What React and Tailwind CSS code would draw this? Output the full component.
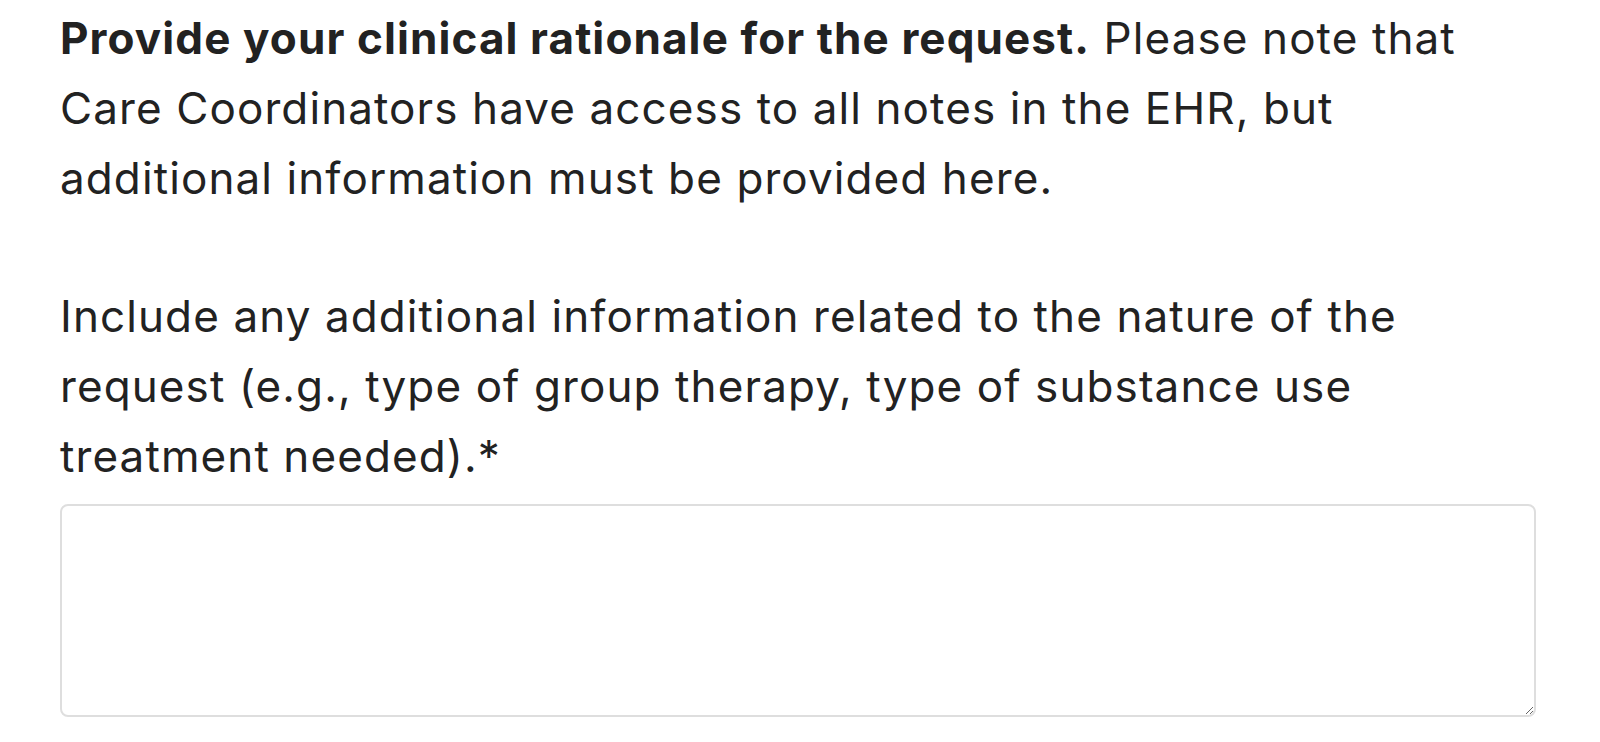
import React from "react";

const App = () => {
  return (
    <div className="min-h-screen bg-white font-['Inter',sans-serif] text-[#222222]">
      <div className="w-[1536px] pl-[60px] pt-[3px]">
        {/* Question label */}
        <p className="text-[44px] leading-[70px] tracking-[1.1px]">
          <span className="font-bold">Provide your clinical rationale for the request.</span>{" "}
          Please note that Care Coordinators have access to all notes in the EHR, but additional information must be provided here.
        </p>
        <p className="mt-[68px] text-[44px] leading-[70px] tracking-[1.1px]">
          Include any additional information related to the nature of the request (e.g., type of group therapy, type of substance use treatment needed).*
        </p>

        {/* Answer box */}
        <textarea
          className="mt-[13px] block h-[213px] w-full rounded-lg border-2 border-[#dedede] bg-white p-4 text-[32px] outline-none"
        />
      </div>
    </div>
  );
};

export default App;
